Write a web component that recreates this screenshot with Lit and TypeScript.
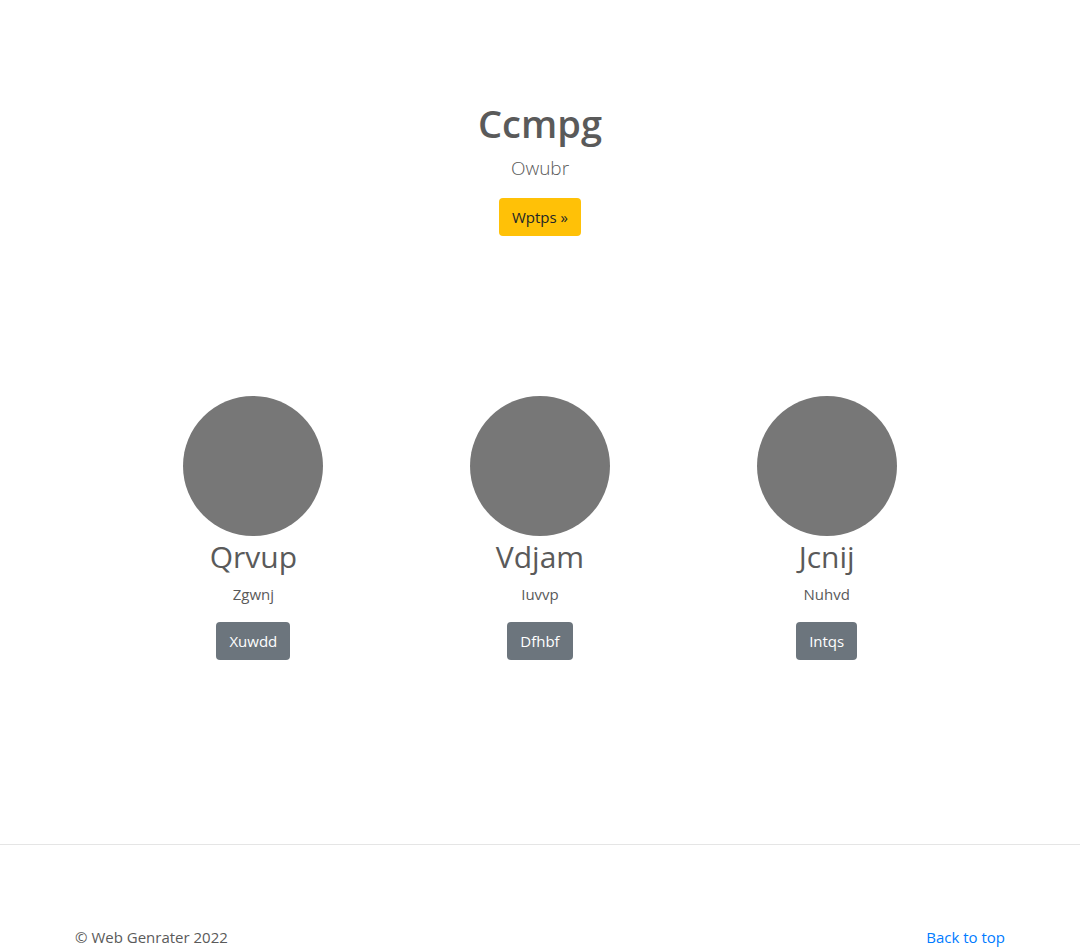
import { LitElement, html, css } from "lit";
import { customElement } from "lit/decorators.js";

interface Feature {
  title: string;
  text: string;
  action: string;
}

const features: Feature[] = [
  { title: "Qrvup", text: "Zgwnj", action: "Xuwdd" },
  { title: "Vdjam", text: "Iuvvp", action: "Dfhbf" },
  { title: "Jcnij", text: "Nuhvd", action: "Intqs" },
];

@customElement("app-root")
export class AppRoot extends LitElement {
  static styles = css`
    :host {
      display: block;
      color: #5a5a5a;
      background: #fff;
      font: 15px/24px "Open Sans", "Noto Sans", sans-serif;
    }
    * {
      box-sizing: border-box;
    }
    h1,
    h2,
    p {
      margin: 0;
    }
    .container {
      max-width: 960px;
      margin: 0 auto;
      padding: 0 15px;
    }
    .hero {
      padding-top: 99px;
      padding-bottom: 160px;
      text-align: center;
    }
    .hero-title {
      font-size: 38px;
      line-height: 48px;
      font-weight: 600;
      margin-bottom: 8px;
    }
    .lead {
      font-size: 19px;
      line-height: 27px;
      font-weight: 300;
      margin-bottom: 16px;
    }
    .btn {
      font: inherit;
      padding: 6px 12px;
      border: 1px solid transparent;
      border-radius: 4px;
      cursor: pointer;
    }
    .warning {
      color: #212529;
      background: #ffc107;
    }
    .secondary {
      color: #fff;
      background: #6c757d;
    }
    .features {
      max-width: 890px;
      display: grid;
      grid-template-columns: repeat(3, 1fr);
      text-align: center;
    }
    .feature {
      display: flex;
      flex-direction: column;
      align-items: center;
    }
    .avatar {
      width: 140px;
      height: 140px;
      border-radius: 50%;
      background: #777;
    }
    .feature-title {
      font-size: 30px;
      line-height: 42px;
      font-weight: 400;
      margin-bottom: 4px;
    }
    .text {
      margin-bottom: 16px;
    }
    .rule {
      margin: 184px 0 80px;
      border: 0;
      border-top: 1px solid rgba(0, 0, 0, 0.1);
    }
    .footer {
      display: flex;
      justify-content: space-between;
    }
    .top {
      color: #007bff;
      text-decoration: none;
    }
  `;

  render() {
    return html`
      <main>
        <section class="container hero">
          <h1 class="hero-title">Ccmpg</h1>
          <p class="lead">Owubr</p>
          <button class="btn warning" type="button">Wptps »</button>
        </section>
        <section class="container features">
          ${features.map(
            (f) => html`
              <article class="feature">
                <div class="avatar"></div>
                <h2 class="feature-title">${f.title}</h2>
                <p class="text">${f.text}</p>
                <button class="btn secondary" type="button">${f.action}</button>
              </article>
            `
          )}
        </section>
      </main>
      <hr class="rule" />
      <footer class="container footer">
        <p>© Web Genrater 2022</p>
        <a class="top" href="#">Back to top</a>
      </footer>
    `;
  }
}
